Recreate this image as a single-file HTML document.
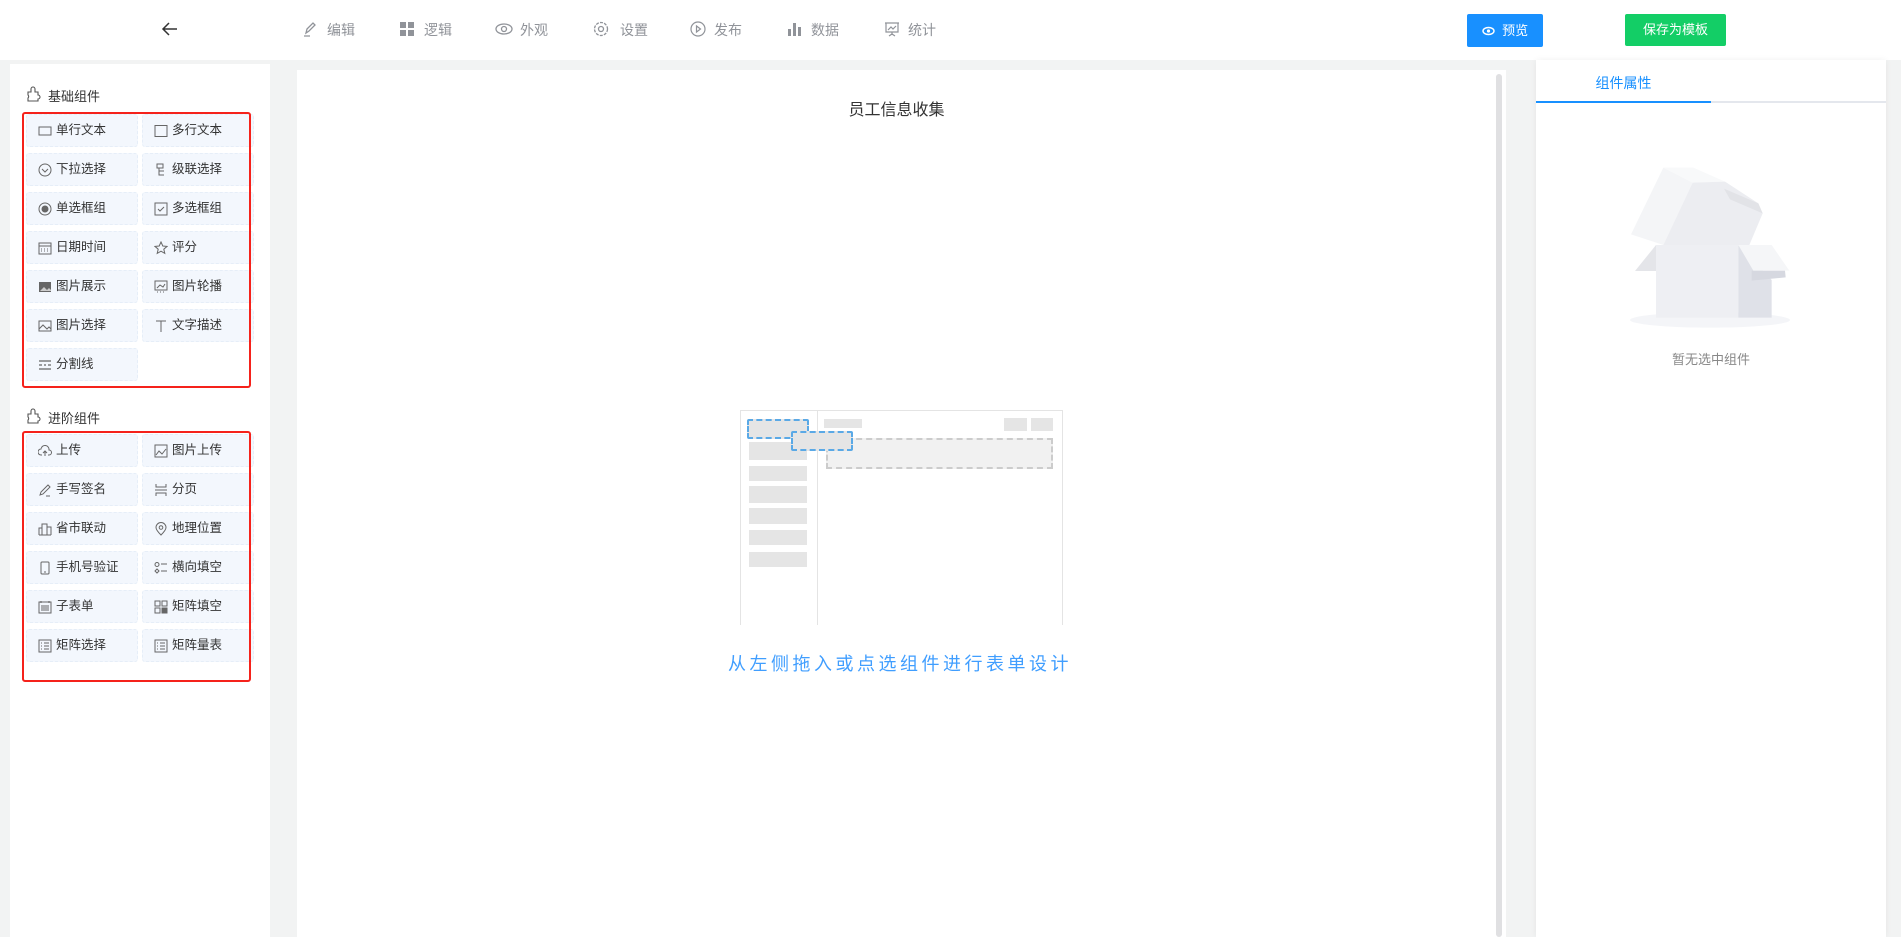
<!DOCTYPE html>
<html><head><meta charset="utf-8"><style>
*{margin:0;padding:0;box-sizing:border-box}
body{width:1901px;height:937px;background:#f2f3f3;font-family:"Liberation Sans","Noto Sans CJK SC",sans-serif;position:relative;overflow:hidden}
.abs{position:absolute}
.hdr{left:0;top:0;width:1901px;height:60px;background:#fff}
.nav{top:21px;font-size:14px;color:#909399;line-height:18px}
.navi{top:21px;width:16px;height:16px}
.btn{color:#fff;font-size:13px;text-align:center;border-radius:2px}
.lp{left:10px;top:64px;width:260px;height:873px;background:#fff}
.sec{font-size:13px;color:#333;left:26px}
.red{border:2px solid #f5221b;border-radius:3px;left:22px;width:229px;z-index:5}
.it{width:112px;height:33px;background:#f3f7fd;border:1px dashed #e6eef8;border-radius:3px;font-size:12.5px;color:#333;line-height:31px;padding-left:29px}
.it svg{position:absolute;left:11px;top:9px}
.cv{left:297px;top:70px;width:1209px;height:867px;background:#fff}
.rp{left:1536px;top:60px;width:350px;height:877px;background:#fff;box-shadow:0 0 6px rgba(0,0,0,.06)}
.g{background:#e5e5e5}
</style></head><body>
<div class="abs hdr"></div>
<svg class="abs" style="left:161px;top:21px" width="18" height="16" viewBox="0 0 18 16"><path d="M16 8H2M8 2L2 8l6 6" fill="none" stroke="#333" stroke-width="1.5"/></svg>

<svg class="abs navi" style="left:302px" viewBox="0 0 16 16"><path d="M4 12l1-4 6-6 2 2-6 6zM2 15h6" fill="none" stroke="#909399" stroke-width="1.3"/></svg>
<div class="abs nav" style="left:327px">编辑</div>
<svg class="abs navi" style="left:399px" viewBox="0 0 16 16"><g fill="#909399"><rect x="1" y="1" width="6" height="6"/><rect x="9" y="1" width="6" height="6"/><rect x="1" y="9" width="6" height="6"/><rect x="9" y="9" width="6" height="6"/></g></svg>
<div class="abs nav" style="left:424px">逻辑</div>
<svg class="abs navi" style="left:495px;width:18px" viewBox="0 0 18 16"><ellipse cx="9" cy="8" rx="8" ry="5" fill="none" stroke="#909399" stroke-width="1.3"/><circle cx="9" cy="8" r="2.5" fill="none" stroke="#909399" stroke-width="1.3"/></svg>
<div class="abs nav" style="left:520px">外观</div>
<svg class="abs navi" style="left:593px" viewBox="0 0 16 16"><circle cx="8" cy="8" r="6.5" fill="none" stroke="#909399" stroke-width="1.3" stroke-dasharray="3 1.2"/><circle cx="8" cy="8" r="2.5" fill="none" stroke="#909399" stroke-width="1.3"/></svg>
<div class="abs nav" style="left:620px">设置</div>
<svg class="abs navi" style="left:690px" viewBox="0 0 16 16"><circle cx="8" cy="8" r="7" fill="none" stroke="#909399" stroke-width="1.2"/><path d="M6.5 5v6l4-3z" fill="none" stroke="#909399" stroke-width="1.2"/></svg>
<div class="abs nav" style="left:714px">发布</div>
<svg class="abs navi" style="left:787px" viewBox="0 0 16 16"><g fill="#909399"><rect x="1" y="8" width="3" height="7"/><rect x="6" y="2" width="3" height="13"/><rect x="11" y="6" width="3" height="9"/></g></svg>
<div class="abs nav" style="left:811px">数据</div>
<svg class="abs navi" style="left:884px" viewBox="0 0 16 16"><path d="M1 2h14M2 2v9h12V2M4 9l3-3 2 2 3-3M8 11v3M5 15l3-2 3 2" fill="none" stroke="#909399" stroke-width="1.2"/></svg>
<div class="abs nav" style="left:908px">统计</div>

<div class="abs btn" style="left:1467px;top:14px;width:76px;height:33px;background:#1890ff;line-height:33px"><svg width="13" height="10" viewBox="0 0 13 10" style="vertical-align:-1px"><ellipse cx="6.5" cy="5" rx="5.5" ry="3.5" fill="none" stroke="#fff" stroke-width="1.4"/><circle cx="6.5" cy="5" r="1.6" fill="#fff"/></svg>&nbsp; 预览</div>
<div class="abs btn" style="left:1625px;top:14px;width:101px;height:32px;background:#13ce66;line-height:32px">保存为模板</div>

<div class="abs lp"></div>
<svg class="abs" style="left:26px;top:86px" width="16" height="16" viewBox="0 0 16 16"><path d="M2 6h3V3a2 2 0 014 0v3h3v3a2 2 0 010 4v2H2v-3a2 2 0 000-3z" fill="none" stroke="#555" stroke-width="1.1"/></svg>
<div class="abs sec" style="left:48px;top:86px">基础组件</div>
<div class="abs red" style="top:112px;height:276px"></div>
<svg class="abs" style="left:26px;top:408px" width="16" height="16" viewBox="0 0 16 16"><path d="M2 6h3V3a2 2 0 014 0v3h3v3a2 2 0 010 4v2H2v-3a2 2 0 000-3z" fill="none" stroke="#555" stroke-width="1.1"/></svg>
<div class="abs sec" style="left:48px;top:408px">进阶组件</div>
<div class="abs red" style="top:431px;height:251px"></div>

<div class="abs it" style="left:26px;top:114px"><svg width="14" height="14" viewBox="0 0 14 14"><rect x="1" y="3" width="12" height="8" fill="none" stroke="#666"/></svg>单行文本</div>
<div class="abs it" style="left:142px;top:114px"><svg width="14" height="14"><rect x="1" y="1.5" width="12" height="11" fill="none" stroke="#666"/></svg>多行文本</div>
<div class="abs it" style="left:26px;top:153px"><svg width="14" height="14"><circle cx="7" cy="7" r="6" fill="none" stroke="#666"/><path d="M4 6l3 3 3-3" fill="none" stroke="#666"/></svg>下拉选择</div>
<div class="abs it" style="left:142px;top:153px"><svg width="14" height="14"><path d="M3 1h6v4H3zM5 5v7h5M5 8h5" fill="none" stroke="#666"/></svg>级联选择</div>
<div class="abs it" style="left:26px;top:192px"><svg width="14" height="14"><circle cx="7" cy="7" r="6" fill="none" stroke="#666"/><circle cx="7" cy="7" r="3.5" fill="#666"/></svg>单选框组</div>
<div class="abs it" style="left:142px;top:192px"><svg width="14" height="14"><rect x="1" y="1" width="12" height="12" fill="none" stroke="#666"/><path d="M4 7l2 2 4-4" fill="none" stroke="#666"/></svg>多选框组</div>
<div class="abs it" style="left:26px;top:231px"><svg width="14" height="14"><rect x="1" y="2" width="12" height="11" fill="none" stroke="#666"/><path d="M1 5h12M3 8h1M6 8h1M9 8h1M3 10h1M6 10h1M9 10h1" stroke="#666"/></svg>日期时间</div>
<div class="abs it" style="left:142px;top:231px"><svg width="14" height="14"><path d="M7 1l1.8 4 4.2.4-3.2 2.8 1 4.2L7 10.2 3.2 12.4l1-4.2L1 5.4 5.2 5z" fill="none" stroke="#666"/></svg>评分</div>
<div class="abs it" style="left:26px;top:270px"><svg width="14" height="14"><rect x="1" y="2" width="12" height="10" fill="#666"/><path d="M2 11l4-4 3 3 2-2 2 2v1H2z" fill="#ccc"/></svg>图片展示</div>
<div class="abs it" style="left:142px;top:270px"><svg width="14" height="14"><rect x="1" y="1" width="12" height="9" fill="none" stroke="#666"/><path d="M3 8l3-3 3 2 2-3M3 12h1M6 12h1M9 12h1" stroke="#666" fill="none"/></svg>图片轮播</div>
<div class="abs it" style="left:26px;top:309px"><svg width="14" height="14"><rect x="1" y="2" width="12" height="10" fill="none" stroke="#666"/><path d="M1 10l4-4 4 4 2-2 2 2" fill="none" stroke="#666"/></svg>图片选择</div>
<div class="abs it" style="left:142px;top:309px"><svg width="14" height="14"><path d="M2 2h10M7 2v11" stroke="#666" fill="none"/></svg>文字描述</div>
<div class="abs it" style="left:26px;top:348px"><svg width="14" height="14"><path d="M1 3h12M1 7h3M6 7h2M10 7h3M1 11h12" stroke="#666" stroke-width="1.3"/></svg>分割线</div>

<div class="abs it" style="left:26px;top:434px"><svg width="14" height="14"><path d="M4 11H3a3 3 0 010-6 4 4 0 018 1 2.5 2.5 0 010 5h-1M7 12V7M5 9l2-2 2 2" fill="none" stroke="#666"/></svg>上传</div>
<div class="abs it" style="left:142px;top:434px"><svg width="14" height="14"><rect x="1" y="1" width="12" height="12" fill="none" stroke="#666"/><path d="M2 11l3-4 3 3 4-5" fill="none" stroke="#666"/></svg>图片上传</div>
<div class="abs it" style="left:26px;top:473px"><svg width="14" height="14"><path d="M2 12l1-3 7-7 2 2-7 7zM8 13h4" fill="none" stroke="#666"/></svg>手写签名</div>
<div class="abs it" style="left:142px;top:473px"><svg width="14" height="14"><path d="M2 1v3h10V1M1 7h12M2 13v-3h10v3" fill="none" stroke="#666"/></svg>分页</div>
<div class="abs it" style="left:26px;top:512px"><svg width="14" height="14"><path d="M1 13V6h3v7M4 13V2h5v11M9 13V5h4v8M1 13h12" fill="none" stroke="#666"/></svg>省市联动</div>
<div class="abs it" style="left:142px;top:512px"><svg width="14" height="14"><path d="M7 13S2 8 2 5.5a5 5 0 0110 0C12 8 7 13 7 13z" fill="none" stroke="#666"/><circle cx="7" cy="5.5" r="1.8" fill="none" stroke="#666"/></svg>地理位置</div>
<div class="abs it" style="left:26px;top:551px"><svg width="14" height="14"><rect x="3" y="1" width="8" height="12" rx="1" fill="none" stroke="#666"/><path d="M6 11h2" stroke="#666"/></svg>手机号验证</div>
<div class="abs it" style="left:142px;top:551px"><svg width="14" height="14"><circle cx="3" cy="3.5" r="2" fill="none" stroke="#666"/><path d="M3 8l2 2-2 2-2-2z M7 3h6M7 10h6" fill="none" stroke="#666"/></svg>横向填空</div>
<div class="abs it" style="left:26px;top:590px"><svg width="14" height="14"><rect x="1" y="2" width="12" height="11" fill="none" stroke="#666"/><path d="M3 1v2M11 1v2M3 6h8M3 8h8M3 10h8" stroke="#666"/></svg>子表单</div>
<div class="abs it" style="left:142px;top:590px"><svg width="14" height="14"><g fill="none" stroke="#666"><rect x="1" y="1" width="5" height="5"/><rect x="8" y="1" width="5" height="5"/><rect x="1" y="8" width="5" height="5"/><rect x="8" y="8" width="5" height="5" fill="#666"/></g></svg>矩阵填空</div>
<div class="abs it" style="left:26px;top:629px"><svg width="14" height="14"><rect x="1" y="1" width="12" height="12" fill="none" stroke="#666"/><path d="M3 4h1M3 7h1M3 10h1M6 4h5M6 7h5M6 10h5" stroke="#666"/></svg>矩阵选择</div>
<div class="abs it" style="left:142px;top:629px"><svg width="14" height="14"><rect x="1" y="1" width="12" height="12" fill="none" stroke="#666"/><path d="M3 4h1M3 7h1M3 10h1M6 4h5M6 7h5M6 10h5" stroke="#666"/></svg>矩阵量表</div>

<div class="abs cv"></div>
<div class="abs" style="left:1496px;top:74px;width:6px;height:863px;background:#e0e0e2;border-radius:3px"></div>
<div class="abs" style="left:297px;top:96px;width:1199px;text-align:center;font-size:16px;color:#333">员工信息收集</div>
<div class="abs" style="left:740px;top:410px;width:323px;height:215px;border:1px solid #e4e4e4;border-bottom:none"></div>
<div class="abs" style="left:817px;top:410px;width:1px;height:215px;background:#e4e4e4"></div>
<div class="abs g" style="left:749px;top:442px;width:58px;height:18px"></div>
<div class="abs g" style="left:749px;top:466px;width:58px;height:15px"></div>
<div class="abs g" style="left:749px;top:486px;width:58px;height:17px"></div>
<div class="abs g" style="left:749px;top:508px;width:58px;height:16px"></div>
<div class="abs g" style="left:749px;top:530px;width:58px;height:15px"></div>
<div class="abs g" style="left:749px;top:552px;width:58px;height:15px"></div>
<div class="abs g" style="left:824px;top:419px;width:38px;height:9px"></div>
<div class="abs g" style="left:1004px;top:418px;width:23px;height:13px"></div>
<div class="abs g" style="left:1031px;top:418px;width:22px;height:13px"></div>
<div class="abs" style="left:826px;top:438px;width:227px;height:31px;background:#f1f1f1;border:2px dashed #ccc"></div>
<div class="abs" style="left:747px;top:419px;width:62px;height:20px;background:#e5e5e5;border:2px dashed #5aa9e6;border-radius:2px"></div>
<div class="abs" style="left:791px;top:431px;width:62px;height:20px;background:#e5e5e5;border:2px dashed #5aa9e6;border-radius:2px"></div>
<div class="abs" style="left:700px;top:650px;width:400px;text-align:center;font-size:18px;letter-spacing:3.5px;color:#409eff">从左侧拖入或点选组件进行表单设计</div>

<div class="abs rp"></div>
<div class="abs" style="left:1536px;top:73px;width:175px;text-align:center;font-size:14px;color:#1890ff">组件属性</div>
<div class="abs" style="left:1536px;top:101px;width:350px;height:2px;background:#e4e7ed"></div>
<div class="abs" style="left:1536px;top:101px;width:175px;height:2px;background:#1890ff"></div>
<svg class="abs" style="left:1400px;top:0" width="501" height="400" viewBox="0 0 1503 1200">
<ellipse cx="930" cy="960" rx="240" ry="23" fill="#f4f5f8"/>
<path d="M768 735L705 813H768z" fill="#e4e5e9"/>
<rect x="768" y="735" width="247" height="218" fill="#eeeff3"/>
<path d="M1015 735L1115 840V953H1015z" fill="#dfe1e8"/>
<path d="M1055 812H1155L1157 832L1055 842z" fill="#d6d8e0"/>
<path d="M1015 735H1115L1168 812H1060z" fill="#f5f6f8"/>
<path d="M693 703L790 503L878 548L790 735z" fill="#f4f5f7"/>
<path d="M790 503L880 503L975 545L878 548z" fill="#f8f9fa"/>
<path d="M878 548L975 545L1075 610L1088 640L1048 735H790z" fill="#ecedf1"/>
<path d="M972 566L1075 610L1088 640L990 598z" fill="#e2e3e7"/>
</svg>
<div class="abs" style="left:1536px;top:349px;width:350px;text-align:center;font-size:13px;color:#888">暂无选中组件</div>
</body></html>
